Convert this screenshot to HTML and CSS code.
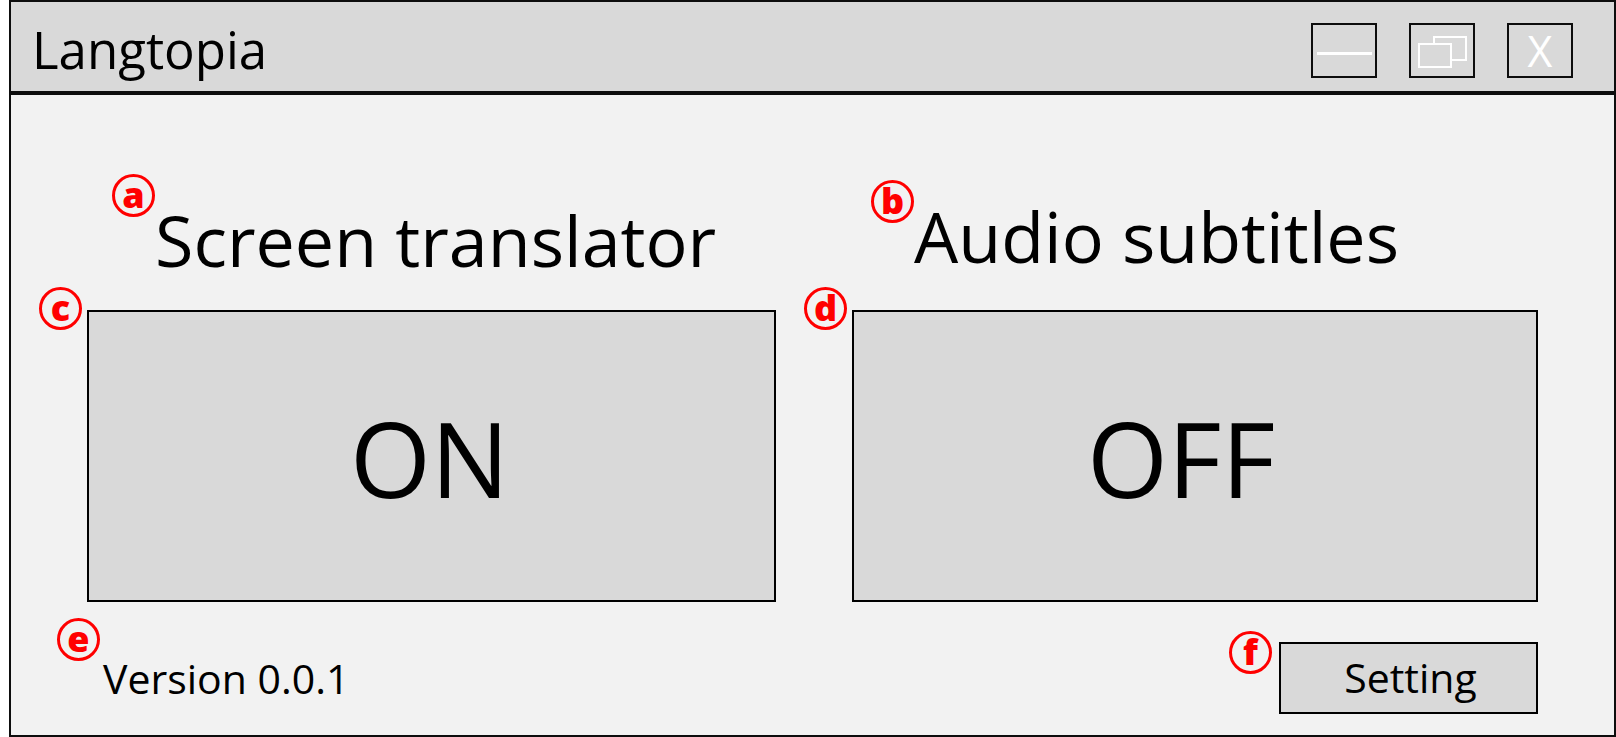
FILE: index.html
```html
<!DOCTYPE html>
<html lang="en">
<head>
<meta charset="utf-8">
<meta name="viewport" content="width=device-width, initial-scale=1">
<title>Langtopia</title>
<link rel="stylesheet" href="styles.css">
</head>
<body>
<div class="window">
  <header class="titlebar">
    <h1 class="app-name">Langtopia</h1>
    <div class="controls">
      <button class="control" type="button" aria-label="Minimize">
        <svg class="icon" viewBox="0 0 62 51" aria-hidden="true"><path d="M4 28.5H59" stroke-width="3"/></svg>
      </button>
      <button class="control" type="button" aria-label="Restore">
        <svg class="icon" viewBox="0 0 62 51" aria-hidden="true"><path d="M8 19H40V42H8ZM23 19V12H55V35H40" stroke-width="2"/></svg>
      </button>
      <button class="control" type="button" aria-label="Close">X</button>
    </div>
  </header>
  <main class="content">
    <div class="features">
      <section class="feature feature-screen">
        <h2 class="feature-title"><span class="label">Screen translator<span class="badge">a</span></span></h2>
        <button class="toggle" type="button">ON<span class="badge">c</span></button>
      </section>
      <section class="feature feature-audio">
        <h2 class="feature-title"><span class="label">Audio subtitles<span class="badge">b</span></span></h2>
        <button class="toggle" type="button">OFF<span class="badge">d</span></button>
      </section>
    </div>
    <footer class="footer">
      <p class="version">Version 0.0.1<span class="badge">e</span></p>
      <button class="setting" type="button">Setting<span class="badge">f</span></button>
    </footer>
  </main>
</div>
</body>
</html>
```
FILE: styles.css
```css
* {
  box-sizing: border-box;
}

body {
  margin: 0;
  background: #fff;
  color: #000;
  font-family: "Open Sans", "Noto Sans", sans-serif;
}

h1, h2, p {
  margin: 0;
  font-weight: 400;
}

button {
  position: relative;
  padding: 0;
  border: 2px solid #000;
  background: #d9d9d9;
  color: #000;
  font: inherit;
}

.window {
  display: flex;
  flex-direction: column;
  min-height: 100vh;
  margin-left: 9px;
  border: 2px solid #0d0d0d;
  background: #f2f2f2;
}

.titlebar {
  display: flex;
  align-items: center;
  justify-content: space-between;
  padding: 0 41px 0 21px;
  height: 93px;
  border-bottom: 4px solid #0d0d0d;
  background: #d9d9d9;
}

.app-name {
  padding-top: 4px;
  font-size: 51px;
  line-height: 80px;
}

.controls {
  display: flex;
  gap: 32px;
  padding-top: 8px;
}

.control {
  width: 66px;
  height: 55px;
  border-color: #0d0d0d;
  color: #fff;
  font-size: 43px;
  line-height: 50px;
}

.icon {
  display: block;
  width: 100%;
  height: 100%;
  fill: none;
  stroke: #fff;
}

.content {
  display: flex;
  flex: 1;
  flex-direction: column;
  padding: 93px 76px 21px;
}

.features {
  display: grid;
  grid-template-columns: 689fr 686fr;
  gap: 76px;
}

.feature-title {
  height: 122px;
  font-size: 70px;
  line-height: 96px;
  white-space: nowrap;
}

.feature-screen .feature-title {
  padding: 4px 0 0 68px;
}

.feature-audio .feature-title {
  padding-left: 62px;
}

.label, .version {
  position: relative;
}

.toggle {
  display: block;
  width: 100%;
  height: 292px;
  padding-top: 4px;
  font-size: 104px;
  line-height: 120px;
}

.feature-screen .toggle {
  padding-right: 4px;
}

.feature-audio .toggle {
  padding-right: 28px;
}

.footer {
  display: flex;
  align-items: center;
  justify-content: space-between;
  margin-top: 40px;
}

.version {
  padding-left: 16px;
  font-size: 41px;
  line-height: 70px;
}

.setting {
  width: 259px;
  height: 72px;
  padding: 0 0 2px 4px;
  font-size: 41px;
  line-height: 66px;
}

.badge {
  position: absolute;
  display: flex;
  align-items: center;
  justify-content: center;
  width: 43px;
  height: 43px;
  padding-bottom: 2px;
  border: 3px solid #f00;
  border-radius: 50%;
  color: #f00;
  font-size: 36px;
  font-weight: 800;
  line-height: 35px;
}

.label .badge {
  left: -43px;
}

.feature-screen .label .badge {
  top: -18px;
}

.feature-audio .label .badge {
  top: -8px;
}

.feature .toggle .badge {
  top: -25px;
  left: -50px;
}

.version .badge {
  top: -25px;
  left: -30px;
}

.setting .badge {
  top: -13px;
  left: -52px;
}
```
